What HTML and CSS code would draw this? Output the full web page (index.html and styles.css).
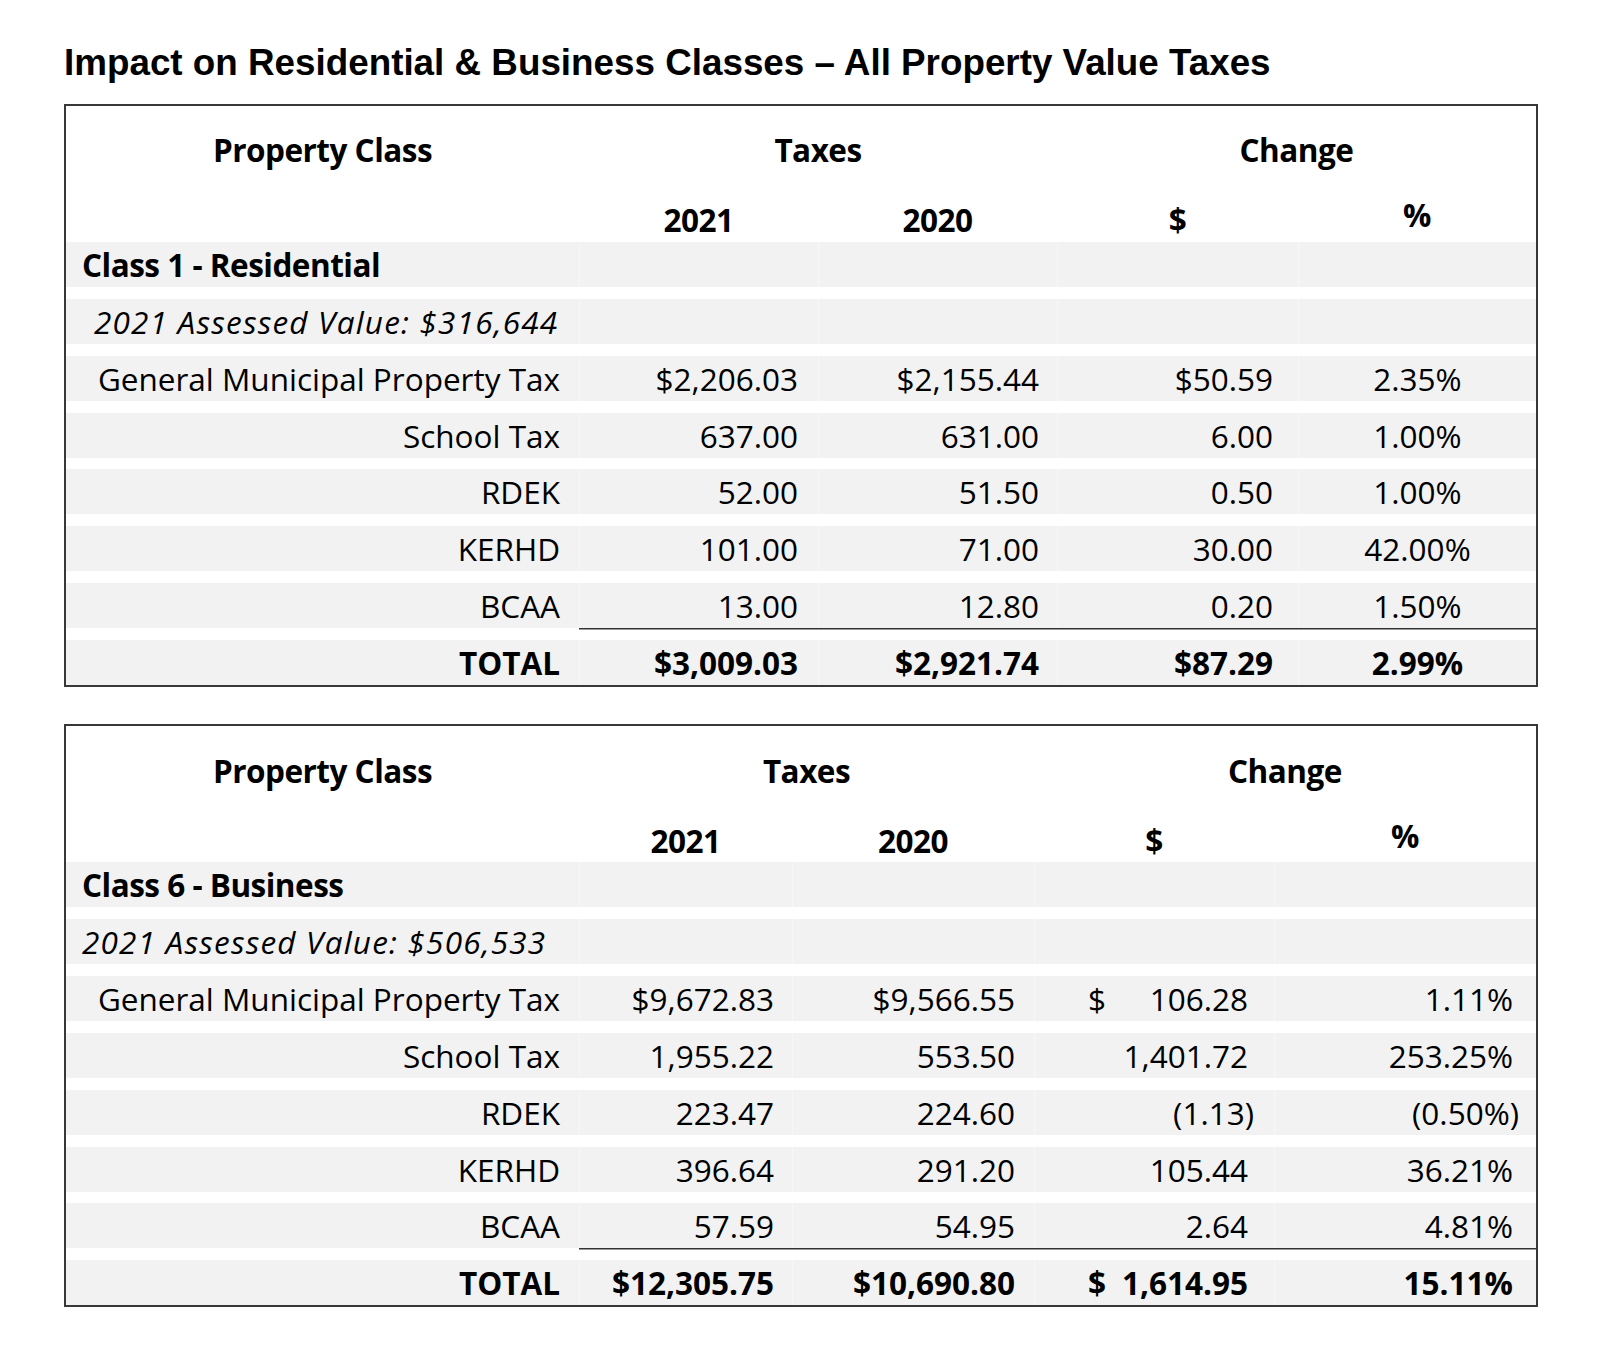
FILE: index.html
```html
<!DOCTYPE html>
<html lang="en">
<head>
<meta charset="utf-8">
<title>Impact on Residential &amp; Business Classes</title>
<link rel="stylesheet" href="styles.css">
</head>
<body>
<h1 class="title">Impact on Residential &amp; Business Classes – All Property Value Taxes</h1>

<div class="tbl t1">
  <div class="row head head1">
    <div class="c">Property Class</div>
    <div class="c span2">Taxes</div>
    <div class="c span2">Change</div>
  </div>
  <div class="row head head2">
    <div class="c"></div>
    <div class="c">2021</div>
    <div class="c">2020</div>
    <div class="c">$</div>
    <div class="c pct">%</div>
  </div>
  <div class="row band">
    <div class="c lbl b left">Class 1 - Residential</div>
    <div class="c"></div><div class="c"></div><div class="c"></div><div class="c"></div>
  </div>
  <div class="row band">
    <div class="c lbl i left indent">2021 Assessed Value: $316,644</div>
    <div class="c"></div><div class="c"></div><div class="c"></div><div class="c"></div>
  </div>
  <div class="row band">
    <div class="c lbl">General Municipal Property Tax</div>
    <div class="c">$2,206.03</div><div class="c">$2,155.44</div><div class="c">$50.59</div><div class="c">2.35%</div>
  </div>
  <div class="row band">
    <div class="c lbl">School Tax</div>
    <div class="c">637.00</div><div class="c">631.00</div><div class="c">6.00</div><div class="c">1.00%</div>
  </div>
  <div class="row band">
    <div class="c lbl">RDEK</div>
    <div class="c">52.00</div><div class="c">51.50</div><div class="c">0.50</div><div class="c">1.00%</div>
  </div>
  <div class="row band">
    <div class="c lbl">KERHD</div>
    <div class="c">101.00</div><div class="c">71.00</div><div class="c">30.00</div><div class="c">42.00%</div>
  </div>
  <div class="row band ul">
    <div class="c lbl">BCAA</div>
    <div class="c">13.00</div><div class="c">12.80</div><div class="c">0.20</div><div class="c">1.50%</div>
  </div>
  <div class="row band b">
    <div class="c lbl">TOTAL</div>
    <div class="c">$3,009.03</div><div class="c">$2,921.74</div><div class="c">$87.29</div><div class="c">2.99%</div>
  </div>
</div>

<div class="tbl t2">
  <div class="row head head1">
    <div class="c">Property Class</div>
    <div class="c span2">Taxes</div>
    <div class="c span2">Change</div>
  </div>
  <div class="row head head2">
    <div class="c"></div>
    <div class="c">2021</div>
    <div class="c">2020</div>
    <div class="c">$</div>
    <div class="c pct">%</div>
  </div>
  <div class="row band">
    <div class="c lbl b left">Class 6 - Business</div>
    <div class="c"></div><div class="c"></div><div class="c"></div><div class="c"></div>
  </div>
  <div class="row band">
    <div class="c lbl i left">2021 Assessed Value: $506,533</div>
    <div class="c"></div><div class="c"></div><div class="c"></div><div class="c"></div>
  </div>
  <div class="row band">
    <div class="c lbl">General Municipal Property Tax</div>
    <div class="c">$9,672.83</div><div class="c">$9,566.55</div>
    <div class="c acct"><span>$</span><span>106.28</span></div>
    <div class="c">1.11%</div>
  </div>
  <div class="row band">
    <div class="c lbl">School Tax</div>
    <div class="c">1,955.22</div><div class="c">553.50</div><div class="c">1,401.72</div><div class="c">253.25%</div>
  </div>
  <div class="row band">
    <div class="c lbl">RDEK</div>
    <div class="c">223.47</div><div class="c">224.60</div><div class="c"><span class="neg">(1.13)</span></div><div class="c"><span class="neg">(0.50%)</span></div>
  </div>
  <div class="row band">
    <div class="c lbl">KERHD</div>
    <div class="c">396.64</div><div class="c">291.20</div><div class="c">105.44</div><div class="c">36.21%</div>
  </div>
  <div class="row band ul">
    <div class="c lbl">BCAA</div>
    <div class="c">57.59</div><div class="c">54.95</div><div class="c">2.64</div><div class="c">4.81%</div>
  </div>
  <div class="row band b">
    <div class="c lbl">TOTAL</div>
    <div class="c">$12,305.75</div><div class="c">$10,690.80</div>
    <div class="c acct"><span>$</span><span>1,614.95</span></div>
    <div class="c">15.11%</div>
  </div>
</div>
</body>
</html>
```

FILE: styles.css
```css
body {
  margin: 0;
  padding: 42px 0 50px 64px;
  background: #ffffff;
  color: #000000;
  font-family: "Open Sans", Lato, sans-serif;
}

.title {
  margin: 0 0 20px;
  font: 700 36.8px/42px "Liberation Sans", Arial, sans-serif;
  color: #000000;
}

.tbl {
  width: 1474px;
  box-sizing: border-box;
  border: 2px solid #383838;
  font-size: 31.5px;
}

.tbl + .tbl {
  margin-top: 37.5px;
}

.t1 { --cols: 513px 239px 239px 241px 238px; }
.t2 { --cols: 513px 213px 242px 240px 262px; }

.row {
  display: grid;
  grid-template-columns: var(--cols);
}

.c {
  display: flex;
  white-space: nowrap;
  min-width: 0;
  box-sizing: border-box;
}

.span2 { grid-column: span 2; }

/* header rows */
.head {
  height: 68px;
  font-weight: 700;
  line-height: 1.2;
  letter-spacing: -0.5px;
}
.head .c {
  align-items: flex-end;
  justify-content: center;
}
.head1 .c { padding-bottom: 5px; }
.head2 .c { padding-bottom: 3px; }
.head2 .pct { padding-bottom: 8px; }

/* body rows */
.band {
  height: 45px;
  background: #f2f2f2;
  line-height: 45px;
}
.band + .band { margin-top: 11.85px; }

.band .c {
  align-items: flex-start;
  justify-content: flex-end;
}
.band .c + .c { border-left: 1px solid #f7f7f7; }

.lbl { padding: 0 19px 0 16px; }
.band .left { justify-content: flex-start; }
.indent { padding-left: 28px; }

.b { font-weight: 700; }
.lbl.b { letter-spacing: -0.5px; }
.i { font-style: italic; letter-spacing: 1.2px; }

/* column alignment, table 1 */
.t1 .band .c:nth-child(2) { padding-right: 20px; }
.t1 .band .c:nth-child(3) { padding-right: 18px; }
.t1 .band .c:nth-child(4) { padding-right: 25px; }
.t1 .band .c:nth-child(5) { justify-content: center; }

/* column alignment, table 2 */
.t2 .band .c:nth-child(2) { padding-right: 18px; }
.t2 .band .c:nth-child(3) { padding-right: 19px; }
.t2 .band .c:nth-child(4) { padding-right: 26px; }
.t2 .band .c:nth-child(5) { padding-right: 23px; }

.t2 .band .acct {
  justify-content: space-between;
  padding-left: 53px;
}

.neg { margin-right: -6px; }

/* total underline */
.ul .c:not(:first-child) {
  box-shadow: 0 1.5px 0 #333333;
}
```
